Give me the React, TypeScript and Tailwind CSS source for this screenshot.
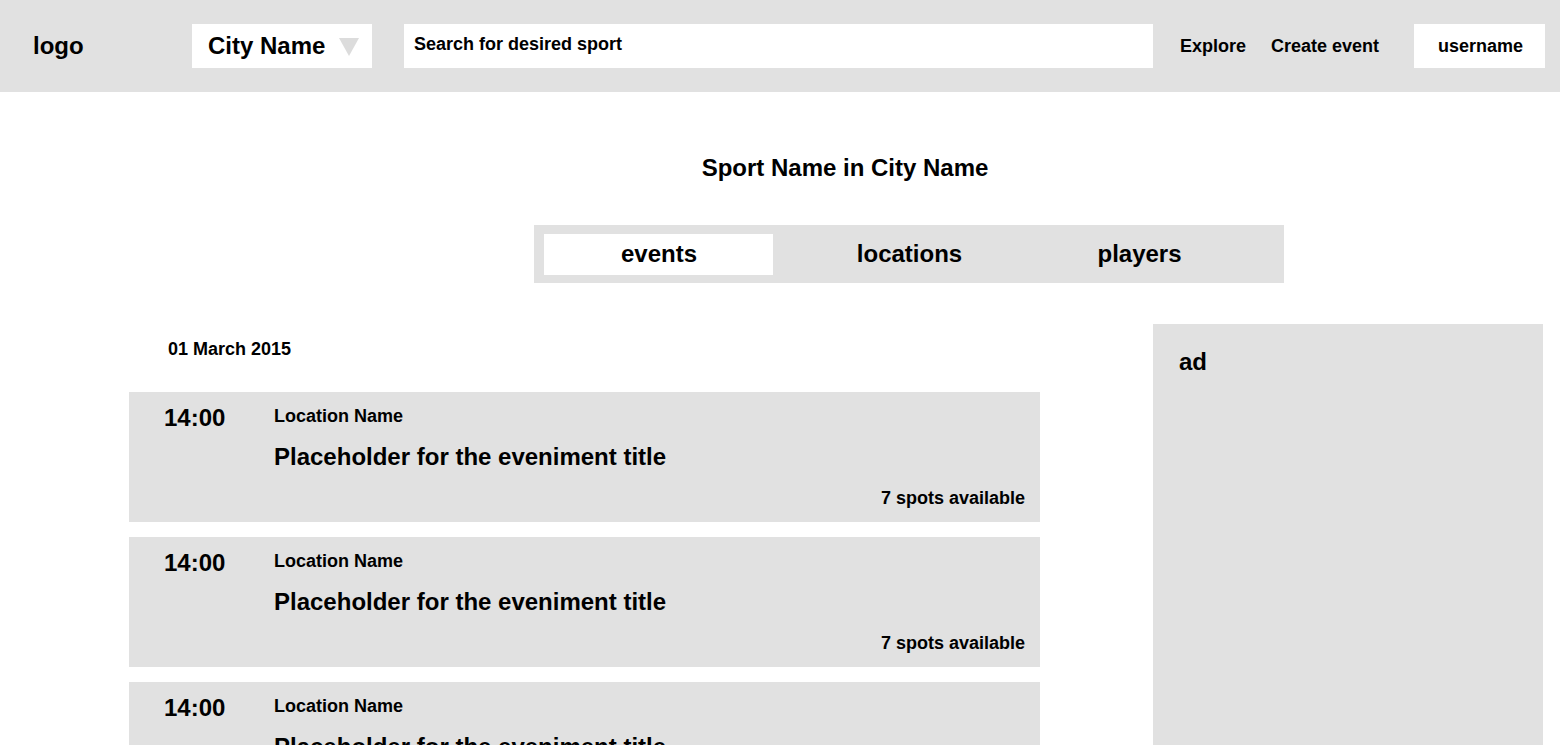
export default function App() {
  const cards = [0, 1, 2];
  return (
    <div className="w-[1560px] h-[745px] overflow-hidden bg-white text-black font-['Liberation_Sans',Arial,sans-serif]">
      <header className="h-[92px] bg-[#e1e1e1] flex items-center">
        <div className="w-[192px] pl-[33px] text-[24px] font-bold leading-[28px]">logo</div>
        <div className="w-[180px] h-[44px] bg-white flex items-center pl-[16px] justify-between pr-[13px]">
          <span className="text-[24px] font-bold leading-[28px]">City Name</span>
          <svg width="20" height="20" viewBox="0 0 20 20"><polygon points="0,2 20,2 10,20" fill="#dcdcdc" /></svg>
        </div>
        <div className="ml-[32px] w-[749px] h-[44px] bg-white flex items-center pl-[10px] pb-[3px] text-[18px] font-bold">Search for desired sport</div>
        <div className="ml-[27px] text-[18px] font-bold">Explore</div>
        <div className="ml-[25px] text-[18px] font-bold">Create event</div>
        <div className="ml-[35px] w-[131px] h-[44px] bg-white flex items-center justify-center pl-[2px] text-[18px] font-bold">username</div>
      </header>
      <div className="pt-[62px] flex justify-center pl-[130px] text-[24px] font-bold leading-[28px]">Sport Name in City Name</div>
      <div className="mt-[43px] ml-[534px] w-[750px] h-[58px] bg-[#e1e1e1] flex items-center pl-[10px] text-[24px] font-bold leading-[28px]">
        <div className="w-[229px] h-[41px] bg-white flex items-center justify-center pl-[1px]">events</div>
        <div className="ml-[22px] w-[229px] flex justify-center">locations</div>
        <div className="ml-[1px] w-[229px] flex justify-center">players</div>
      </div>
      <div className="mt-[41px] flex">
        <div className="ml-[129px] w-[911px]">
          <div className="pl-[39px] pt-[14px] text-[18px] font-bold leading-[22px]">01 March 2015</div>
          <div className="mt-[32px] flex flex-col gap-[15px]">
            {cards.map((i) => (
              <div key={i} className="h-[130px] bg-[#e1e1e1] flex">
                <div className="w-[145px] pl-[35px] pt-[12px] text-[24px] font-bold leading-[28px]">14:00</div>
                <div className="flex-1 pr-[15px]">
                  <div className="pt-[13px] text-[18px] font-bold leading-[22px]">Location Name</div>
                  <div className="mt-[16px] text-[24px] font-bold leading-[28px]">Placeholder for the eveniment title</div>
                  <div className="mt-[16px] text-right text-[18px] font-bold leading-[22px]">7 spots available</div>
                </div>
              </div>
            ))}
          </div>
        </div>
        <div className="ml-[113px] w-[390px] h-[430px] bg-[#e1e1e1] pl-[26px] pt-[24px] text-[24px] font-bold leading-[28px]">ad</div>
      </div>
    </div>
  );
}
